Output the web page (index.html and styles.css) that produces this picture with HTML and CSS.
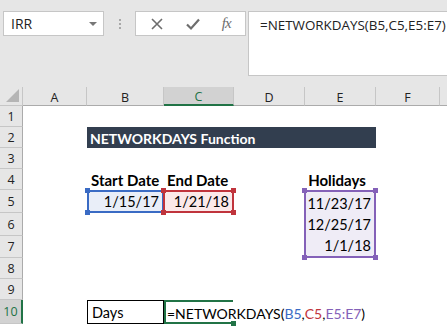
FILE: index.html
```html
<!DOCTYPE html>
<html lang="en">
<head>
    <meta charset="UTF-8">
    <title>NETWORKDAYS</title>
    <link rel="stylesheet" href="styles.css">
</head>
<body>
    <div class="toolbar">
        <div class="name-box">
            <span>IRR</span>
            <span class="caret"></span>
        </div>
        <div class="grip">
            <span></span><span></span><span></span>
        </div>
        <div class="fx-buttons">
            <svg width="14" height="14" viewBox="0 0 14 14"><path d="M2 2 L12 12 M12 2 L2 12" stroke="#6d6d6d" stroke-width="1.6" fill="none"/></svg>
            <svg width="16" height="14" viewBox="0 0 16 14"><path d="M2 7.5 L6 11.5 L14 2.5" stroke="#6d6d6d" stroke-width="2.2" fill="none"/></svg>
            <span class="fx">fx</span>
        </div>
        <div class="formula-bar">=NETWORKDAYS(B5,C5,E5:E7)</div>
    </div>

    <div class="sheet">
        <!-- header row -->
        <div class="corner"><span></span></div>
        <div class="col-head">A</div>
        <div class="col-head">B</div>
        <div class="col-head active">C</div>
        <div class="col-head">D</div>
        <div class="col-head">E</div>
        <div class="col-head">F</div>
        <div class="col-head last"></div>

        <div class="row-head r1">1</div>
        <div class="row-head r2">2</div>
        <div class="row-head r3">3</div>
        <div class="row-head r4">4</div>
        <div class="row-head r5">5</div>
        <div class="row-head r6">6</div>
        <div class="row-head r7">7</div>
        <div class="row-head r8">8</div>
        <div class="row-head r9">9</div>
        <div class="row-head r10 active">10</div>

        <div class="title">NETWORKDAYS Function</div>

        <div class="cell label start">Start Date</div>
        <div class="cell label end">End Date</div>
        <div class="cell label holidays">Holidays</div>

        <div class="range blue">
            <span>1/15/17</span>
            <i class="h tl"></i><i class="h bl"></i>
        </div>
        <div class="range red">
            <span>1/21/18</span>
            <i class="h tl"></i><i class="h tr"></i><i class="h bl"></i><i class="h br"></i>
        </div>
        <div class="range purple">
            <span>11/23/17</span>
            <span>12/25/17</span>
            <span>1/1/18</span>
            <i class="h tl"></i><i class="h tr"></i><i class="h bl"></i><i class="h br"></i>
        </div>

        <div class="cell days">Days</div>
        <div class="cell editing">=NETWORKDAYS(<b class="c-blue">B5</b>,<b class="c-red">C5</b>,<b class="c-purple">E5:E7</b>)<span class="cursor"></span>
            <i class="h br green"></i>
        </div>
    </div>
</body>
</html>
```

FILE: styles.css
```css
body {
    margin: 0;
    width: 447px;
    height: 329px;
    overflow: hidden;
    background-color: #e6e6e6;
    font-family: "Open Sans", sans-serif;
    color: #222;
}

/* top bar */
.toolbar {
    height: 87px;
    display: flex;
    align-items: flex-start;
    padding: 11px 0 0 3px;
    box-sizing: border-box;
}

.toolbar > div {
    flex-shrink: 0;
}

.name-box {
    width: 101px;
    height: 25px;
    box-sizing: border-box;
    background-color: white;
    border: 1px solid #c6c6c6;
    display: flex;
    align-items: center;
    justify-content: space-between;
    padding: 0 6px 0 7px;
    font-size: 14px;
}

.caret {
    width: 0;
    height: 0;
    border-left: 4px solid transparent;
    border-right: 4px solid transparent;
    border-top: 4px solid #777;
}

.grip {
    width: 31px;
    height: 25px;
    display: flex;
    flex-direction: column;
    align-items: center;
    justify-content: center;
    gap: 2px;
}

.grip span {
    width: 2px;
    height: 2px;
    background-color: #a8a8a8;
}

.fx-buttons {
    width: 111px;
    height: 25px;
    box-sizing: border-box;
    background-color: white;
    border: 1px solid #c6c6c6;
    display: flex;
    align-items: center;
    justify-content: space-around;
    padding: 0 4px;
}

.fx {
    font-family: "Liberation Serif", serif;
    font-style: italic;
    font-size: 15px;
    color: #6d6d6d;
    letter-spacing: -1px;
}

.toolbar > .formula-bar {
    flex: 1 1 0;
    min-width: 0;
    margin-left: 2px;
    height: 65px;
    box-sizing: border-box;
    background-color: white;
    border: 1px solid #c6c6c6;
    border-right: none;
    padding: 4px 0 0 11px;
    font-size: 13.4px;
    white-space: nowrap;
}

/* sheet grid */
.sheet {
    display: grid;
    grid-template-columns: 23px 64px 77px 70px 71px 71px 64px 1fr;
    grid-template-rows: 19px 21px 21px 21px 21px 23px 23px 22px 21px 21px 24px 1fr;
    height: 242px;
    background-color: white;
}

.corner {
    background-color: #e6e6e6;
    border-right: 1px solid #c6c6c6;
    border-bottom: 1px solid #c6c6c6;
    position: relative;
}

.corner span {
    position: absolute;
    right: 3px;
    bottom: 3px;
    width: 0;
    height: 0;
    border-left: 13px solid transparent;
    border-bottom: 13px solid #b5b5b5;
}

.col-head {
    background-color: #e6e6e6;
    border-right: 1px solid #c6c6c6;
    border-bottom: 1px solid #ababab;
    display: flex;
    align-items: center;
    justify-content: center;
    font-size: 12.5px;
    padding-top: 2px;
    box-sizing: border-box;
}

.col-head.active {
    background-color: #d2d2d2;
    border-bottom: 2px solid #217346;
    color: #217346;
}

.col-head.last {
    border-right: none;
}

.row-head {
    grid-column: 1;
    background-color: #e6e6e6;
    border-right: 1px solid #ababab;
    border-bottom: 1px solid #c6c6c6;
    display: flex;
    align-items: center;
    justify-content: center;
    font-size: 12.5px;
    box-sizing: border-box;
}

.row-head.active {
    background-color: #d2d2d2;
    border-right: 2px solid #217346;
    color: #217346;
}

.r1 { grid-row: 2; }
.r2 { grid-row: 3; }
.r3 { grid-row: 4; }
.r4 { grid-row: 5; }
.r5 { grid-row: 6; }
.r6 { grid-row: 7; }
.r7 { grid-row: 8; }
.r8 { grid-row: 9; }
.r9 { grid-row: 10; }
.r10 { grid-row: 11; }

/* cells */
.title {
    grid-column: 3 / 7;
    grid-row: 3;
    background-color: #323e4f;
    color: white;
    font-family: Lato, sans-serif;
    font-weight: bold;
    font-size: 14px;
    display: flex;
    align-items: center;
    padding: 1px 0 0 3px;
}

.cell {
    font-family: Lato, sans-serif;
    font-size: 15px;
    color: #000;
    display: flex;
    align-items: flex-end;
    padding: 0 3px 1px 4px;
    white-space: nowrap;
}

.label {
    grid-row: 5;
    font-weight: bold;
}

.start { grid-column: 3; }
.end { grid-column: 4; padding-left: 3px; }
.holidays { grid-column: 6; justify-content: center; padding-right: 11px; }

.range {
    position: relative;
    font-family: Lato, sans-serif;
    font-size: 14.5px;
    color: #000;
    border: 2px solid;
    margin: 0 0 0 -1px;
    display: flex;
    flex-direction: column;
    padding: 0 3px 0 0;
}

.range span {
    flex: 1;
    display: flex;
    align-items: flex-end;
    justify-content: flex-end;
    line-height: 18px;
}

.range.blue {
    grid-column: 3;
    grid-row: 6;
    border-color: #3a6bc4;
    background-color: #e9eef8;
    margin-left: 0;
}

.range.red {
    grid-column: 4;
    grid-row: 6;
    border-color: #c0343c;
    background-color: #fbe9e9;
}

.range.purple {
    grid-column: 6;
    grid-row: 6 / 9;
    border-color: #8461b8;
    background-color: #efecf6;
    padding: 0 3px 1px 0;
}

.h {
    position: absolute;
    width: 5px;
    height: 5px;
}

.blue .h { background-color: #3a6bc4; }
.red .h { background-color: #c0343c; }
.purple .h { background-color: #8461b8; }
.h.green { background-color: #217346; }

.tl { top: -4px; left: -4px; }
.tr { top: -4px; right: -4px; }
.bl { bottom: -4px; left: -4px; }
.br { bottom: -4px; right: -4px; }

.days {
    grid-column: 3;
    grid-row: 11;
    border: 1px solid #000;
    align-items: center;
    padding-top: 2px;
    font-size: 14.5px;
}

.editing {
    grid-column: 4;
    grid-row: 11;
    position: relative;
    border: 2px solid #217346;
    border-right: none;
    margin-right: 1px;
    align-items: center;
    padding: 2px 0 0 1px;
    overflow: visible;
    z-index: 1;
    font-size: 14px;
}

.editing b {
    font-weight: normal;
}

.c-blue { color: #3a6bc4; }
.c-red { color: #c0343c; }
.c-purple { color: #8461b8; }

.cursor {
    display: inline-block;
    width: 2px;
    height: 18px;
    margin-left: 2px;
    background-color: #000;
}

.editing .br {
    right: -3px;
}
```
